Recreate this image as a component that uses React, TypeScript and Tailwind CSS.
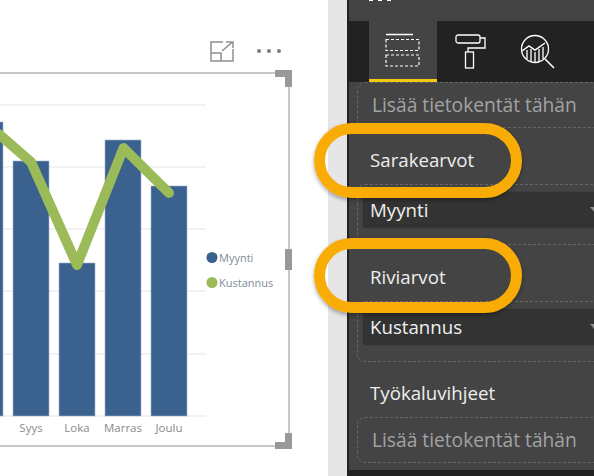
const font = { fontFamily: '"Open Sans", "Noto Sans", sans-serif' }

const bars = [
  { x: -33, top: 122 },
  { x: 13, top: 161 },
  { x: 59, top: 263 },
  { x: 105, top: 140 },
  { x: 151, top: 186 },
]
const months = [
  { x: 31, label: 'Syys' },
  { x: 77, label: 'Loka' },
  { x: 123, label: 'Marras' },
  { x: 169, label: 'Joulu' },
]
const grid = [105, 167, 229, 291, 354, 416]

function Chart() {
  return (
    <svg width="306" height="371" viewBox="-18 74 306 371" className="block" style={font}>
      {grid.map(y => (
        <line key={y} x1="-18" x2="206" y1={y} y2={y} stroke="#eeeeee" strokeWidth="1.5" />
      ))}
      {bars.map(b => (
        <rect key={b.x} x={b.x} y={b.top} width="36" height={416 - b.top} fill="#3b618e" stroke="#9fb3cb" strokeWidth="0.6" />
      ))}
      <polyline
        points="-30,115 0,135 31,162 77,265 123.500,148 169,193"
        fill="none"
        stroke="#9bbb59"
        strokeWidth="10"
        strokeLinecap="round"
        strokeLinejoin="round"
      />
      {months.map(m => (
        <text key={m.label} x={m.x} y="432" textAnchor="middle" fontSize="11.500" fill="#8a8a8a">{m.label}</text>
      ))}
      <circle cx="212" cy="257.500" r="5.500" fill="#3b618e" />
      <text x="219" y="261.500" fontSize="11" fill="#7f8a96">Myynti</text>
      <circle cx="212" cy="282.500" r="5.500" fill="#9bbb59" />
      <text x="219" y="286.500" fontSize="11" fill="#7f8a96">Kustannus</text>
    </svg>
  )
}

function DropBox({ children }: { children: string }) {
  return (
    <div className="mr-[-12px] h-[61px] rounded-lg border border-dashed border-[#666666] px-[5px] pt-[7px]">
      <div className="flex h-[36px] items-center justify-between rounded-[4px] bg-[#333333] pl-[7px] text-[18.700px] text-[#f0f0f0] shadow-[0_0_1px_#222]">
        <span>{children}</span>
        <span className="h-0 w-0 border-x-[5px] border-t-[6px] border-x-transparent border-t-[#8c8c8c]" />
      </div>
    </div>
  )
}

function EmptyBox() {
  return (
    <div className="mr-[-12px] flex h-[46px] items-center rounded-lg border border-dashed border-[#666666] pl-[14px] text-[19.200px] text-[#a3a3a3]">
      Lisää tietokentät tähän
    </div>
  )
}

function Callout({ className }: { className: string }) {
  return (
    <div className={`absolute left-[314px] h-[75px] w-[208px] rounded-[38px] border-[11px] border-[#f9ab06] shadow-[0_2px_4px_rgba(0,0,0,0.35)] ${className}`} />
  )
}

export default function App() {
  return (
    <div className="relative flex h-[476px] w-[594px] overflow-hidden bg-white" style={font}>
      <div className="relative w-[328px] shrink-0 bg-white">
        <div className="flex h-[72px] items-start justify-end gap-[22.500px] pr-[47.500px] pt-[41px]">
          <svg width="24" height="21" viewBox="0 0 24 21" fill="none" stroke="#8e8e8e" strokeWidth="1.500">
            <path d="M13 1H1V20H23V8" />
            <path d="M1 12H11V20" />
            <path d="M12 10L22 1.500M16 1H23V7" />
          </svg>
          <div className="flex items-center gap-[6px] pt-[8px]">
            <span className="h-[4px] w-[4px] rounded-full bg-[#7c7c7c]" />
            <span className="h-[4px] w-[4px] rounded-full bg-[#7c7c7c]" />
            <span className="h-[4px] w-[4px] rounded-full bg-[#7c7c7c]" />
          </div>
        </div>
        <div className="relative ml-[-20px] h-[375px] w-[310px] border-2 border-[#c8c8c8]">
          <Chart />
          <svg width="17" height="17" viewBox="0 0 17 17" className="absolute right-[-4px] top-[-4px]">
            <path d="M0 0H17V17H10V7H0Z" fill="#999999" />
          </svg>
          <svg width="17" height="16" viewBox="0 0 17 16" className="absolute bottom-[-4px] right-[-4px]">
            <path d="M10 0H17V16H0V9H10Z" fill="#999999" />
          </svg>
          <div className="absolute right-[-4px] top-[175px] h-[21px] w-[7px] bg-[#999999]" />
        </div>
      </div>

      <div className="w-[19px] shrink-0 bg-[#e6e6e6]" />

      <div className="flex min-w-0 flex-1 flex-col border-l-2 border-[#222222] bg-[#444444]">
        <div className="flex h-[21px] items-start gap-[5px] pl-[20px]">
          <span className="h-[1px] w-[4px] bg-white" />
          <span className="h-[1px] w-[4px] bg-white" />
          <span className="h-[1px] w-[4px] bg-white" />
        </div>
        <div className="flex h-[61px] bg-[#222222] pl-[20px]">
          <div className="flex w-[68px] items-center justify-center border-b-[3px] border-[#f2c811] bg-[#444444]">
            <svg width="36" height="34" viewBox="0 0 36 34" fill="none" stroke="#ffffff" strokeWidth="1.200">
              <path d="M1 1.500H28" strokeWidth="1.500" />
              <rect x="1" y="6.500" width="33" height="11" strokeDasharray="3 2" />
              <rect x="1" y="22" width="33" height="11" strokeDasharray="3 2" />
            </svg>
          </div>
          <div className="w-[65px] pl-[18px] pt-[13px]">
            <svg width="32" height="36" viewBox="0 0 32 36" fill="none" stroke="#ffffff" strokeWidth="1.300">
              <rect x="1" y="1" width="24" height="8" rx="2" />
              <path d="M25 4H30V14H13V18" />
              <rect x="10.500" y="18" width="8" height="16" />
            </svg>
          </div>
          <div className="w-[66px] pl-[18px] pt-[13px]">
            <svg width="36" height="36" viewBox="0 0 36 36" fill="none" stroke="#ffffff" strokeWidth="1.300">
              <circle cx="15" cy="15" r="13.500" />
              <path d="M25 25L34 34" strokeWidth="1.600" />
              <path d="M2 17L9 12L15 16L25 9" strokeWidth="1.500" />
              <path d="M7 16V25M11 15V28M15 18V29M19 15V28M23 13V25" />
            </svg>
          </div>
        </div>

        <div className="flex flex-1 flex-col pl-[8px] pr-0">
          <EmptyBox />
          <div className="flex h-[56px] items-end pb-[10px] pl-[13px] text-[18.700px] text-[#eeeeee]">Sarakearvot</div>
          <DropBox>Myynti</DropBox>
          <div className="flex h-[56px] items-end pb-[10px] pl-[13px] text-[18.700px] text-[#eeeeee]">Riviarvot</div>
          <DropBox>Kustannus</DropBox>
          <div className="flex h-[55px] items-end pb-[10px] pl-[13px] text-[18.700px] text-[#eeeeee]">Työkaluvihjeet</div>
          <EmptyBox />
        </div>
        <div className="h-[6px] bg-[#222222]" />
      </div>

      <Callout className="top-[123px]" />
      <Callout className="top-[238px]" />
    </div>
  )
}
